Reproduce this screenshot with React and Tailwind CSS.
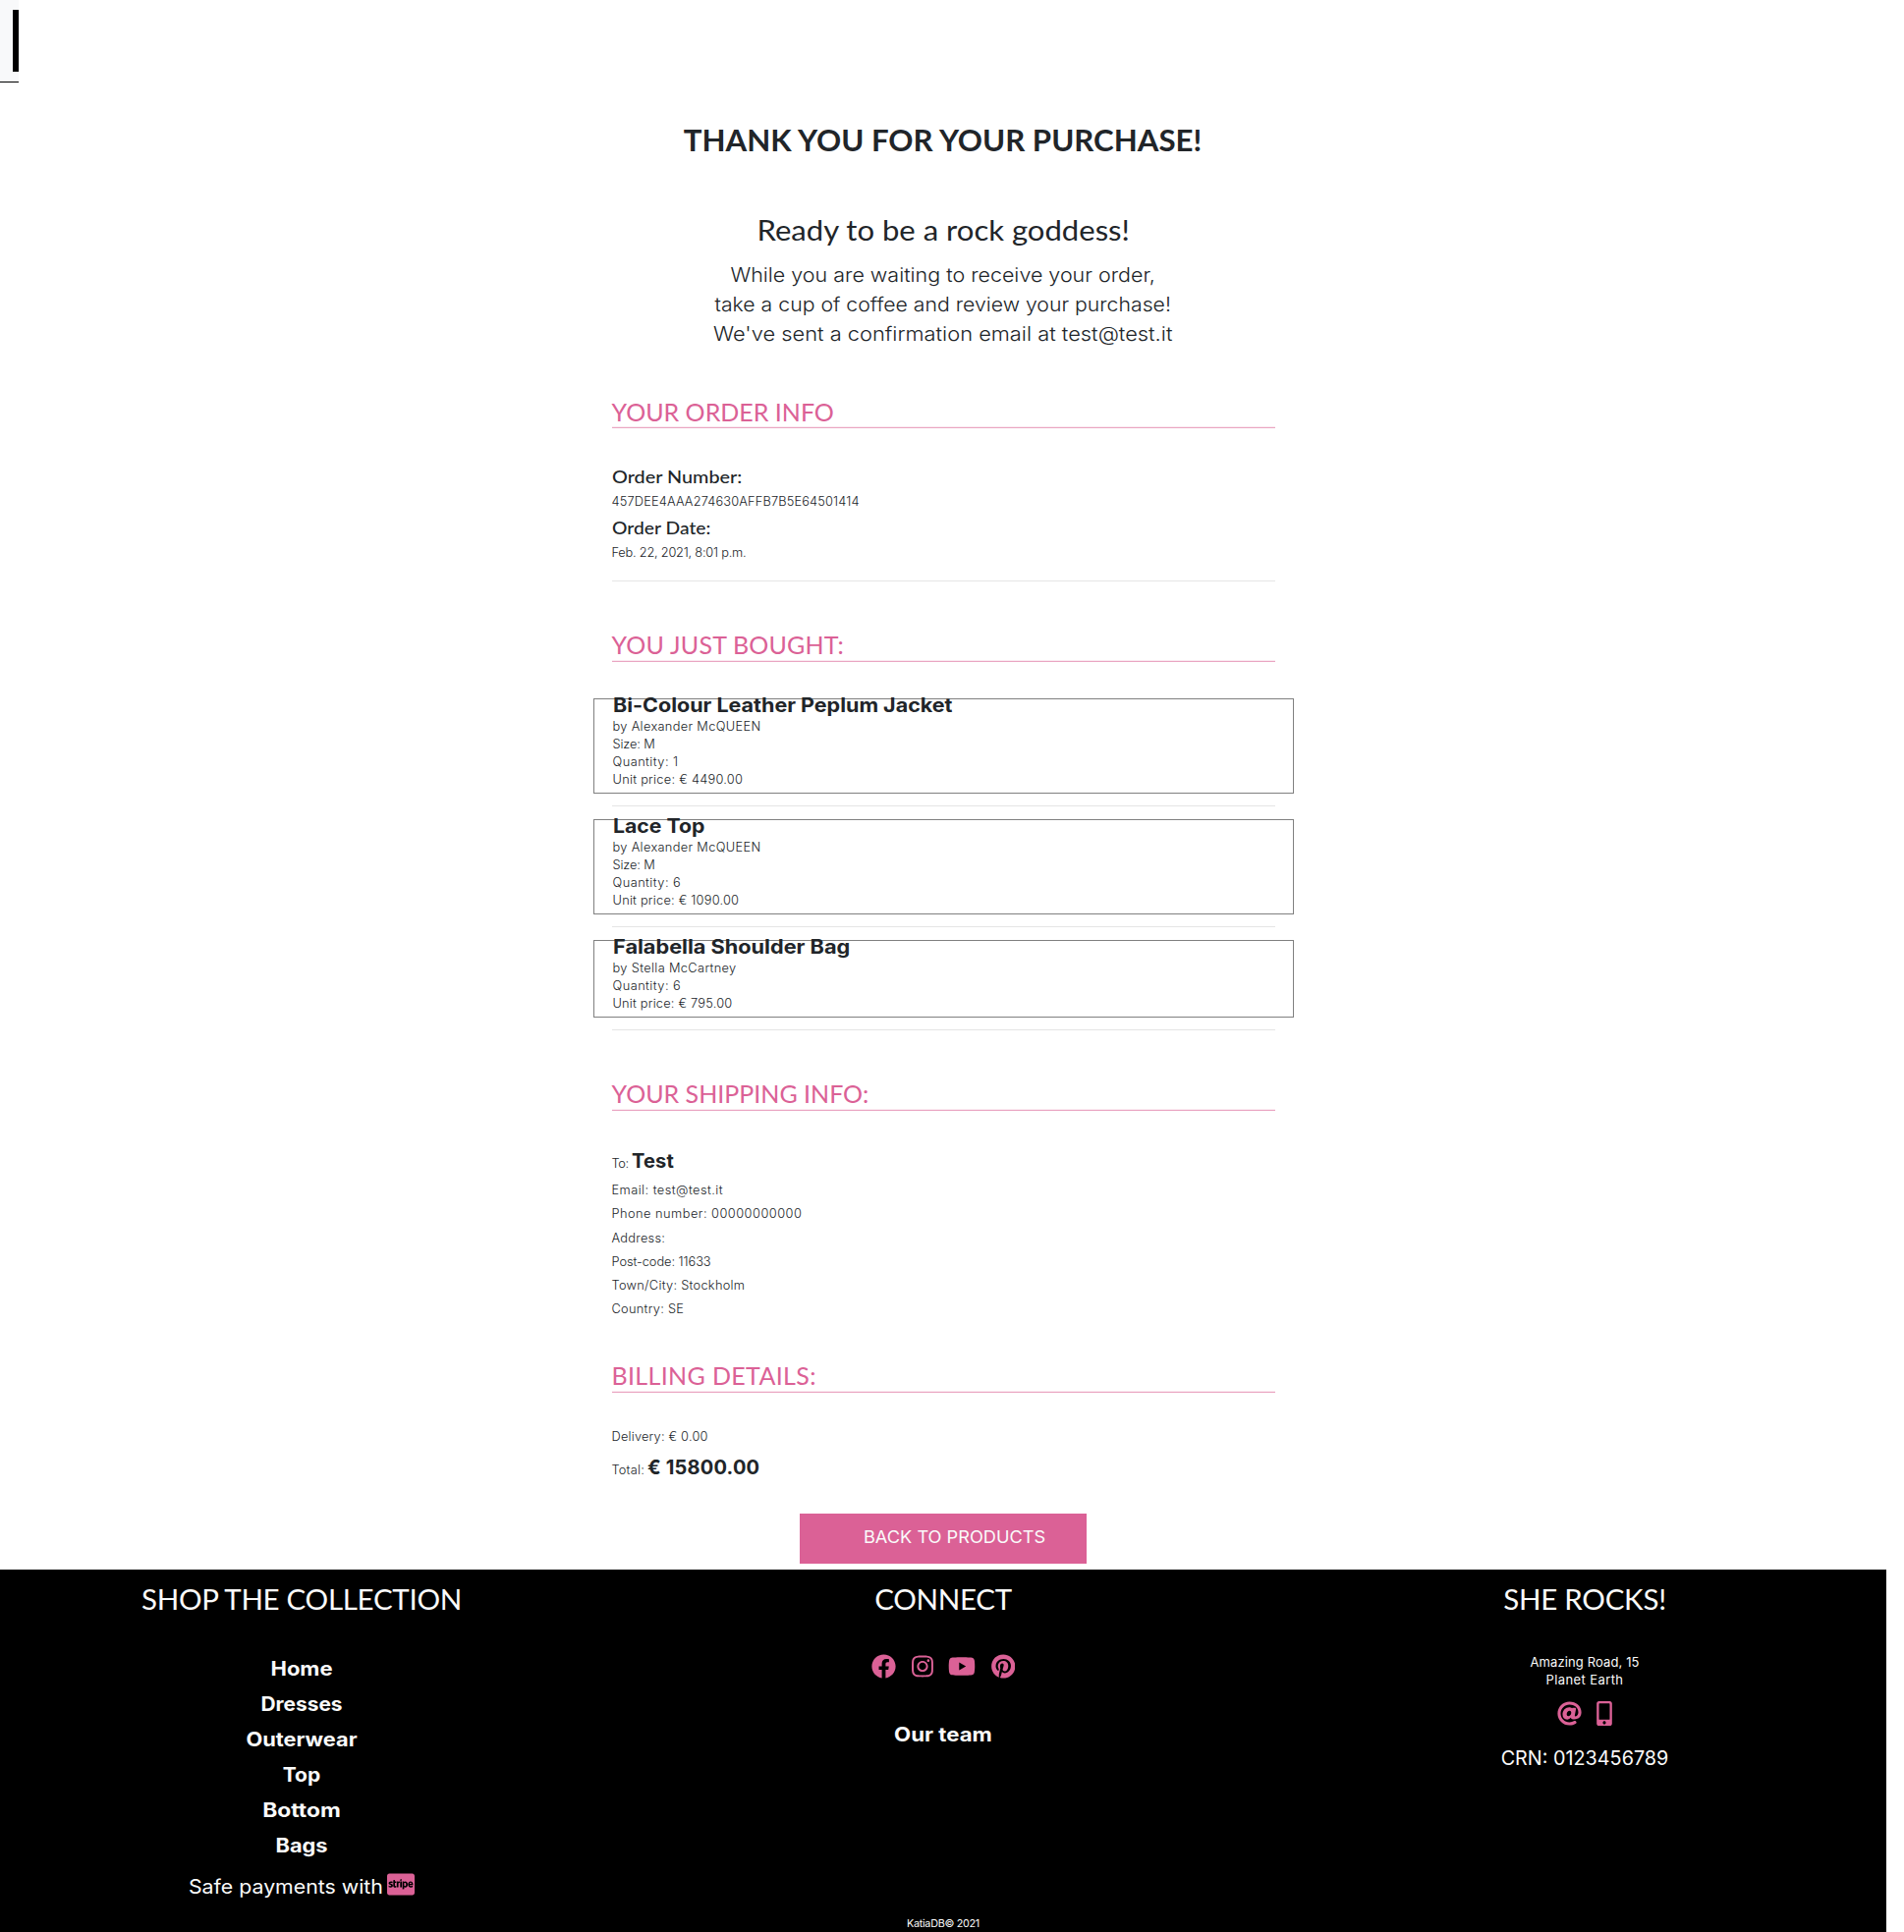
import React from "react";
import { FaFacebook, FaInstagram, FaYoutube, FaPinterest, FaCcStripe, FaAt, FaMobileAlt } from "react-icons/fa";

const LATO = "font-['Lato',sans-serif]";

function SectionTitle({ children, className, short }) {
  return (
    <div className={className}>
      <h2 className={`${LATO} text-[25px] leading-[30px] whitespace-nowrap text-[#db6196]`}>{children}</h2>
      <div className={short ? "h-px bg-[#fae9f0]" : "mt-px h-px bg-[#fae9f0]"} />
      <div className="h-px bg-[#eaa6c2]" />
    </div>
  );
}

function Product({ name, nameClass, className, lines }) {
  return (
    <div>
      <div className={`-mx-[19px] border border-[#808080] pl-[19px] ${className}`}>
        <h3 className={`-mt-1 mb-[3px] origin-left text-[20px] leading-5 font-bold ${nameClass}`}>{name}</h3>
        {lines.map(([text, spacing]) => (
          <p key={text} className={`text-[12.8px] leading-[18px] font-light ${spacing}`}>{text}</p>
        ))}
      </div>
      <div className="mt-3 h-px bg-[#e5e5e5]" />
    </div>
  );
}

const products = [
  {
    name: "Bi-Colour Leather Peplum Jacket",
    nameClass: "w-[321px] whitespace-nowrap scale-x-[1.075]",
    className: "h-[97px]",
    lines: [
      ["by Alexander McQUEEN", "tracking-[0.33px]"],
      ["Size: M", "tracking-[-0.1px]"],
      ["Quantity: 1", "tracking-[0.45px]"],
      ["Unit price: € 4490.00", "tracking-[0.26px]"],
    ],
  },
  {
    name: "Lace Top",
    nameClass: "w-[88px] whitespace-nowrap scale-x-[1.06]",
    className: "h-[97px]",
    lines: [
      ["by Alexander McQUEEN", "tracking-[0.33px]"],
      ["Size: M", "tracking-[-0.1px]"],
      ["Quantity: 6", "tracking-[0.45px]"],
      ["Unit price: € 1090.00", "tracking-[0.22px]"],
    ],
  },
  {
    name: "Falabella Shoulder Bag",
    nameClass: "w-[222px] whitespace-nowrap scale-x-[1.085]",
    className: "h-[79px]",
    lines: [
      ["by Stella McCartney", "tracking-[0.35px]"],
      ["Quantity: 6", "tracking-[0.45px]"],
      ["Unit price: € 795.00", "tracking-[0.2px]"],
    ],
  },
];

const shipping = [
  ["Email: test@test.it", "tracking-[0.45px]"],
  ["Phone number: 00000000000", "tracking-[0.48px]"],
  ["Address:", "tracking-[0.27px]"],
  ["Post-code: 11633", "tracking-[-0.05px]"],
  ["Town/City: Stockholm", "tracking-[0.28px]"],
  ["Country: SE", "tracking-[0.28px]"],
];

const links = [
  ["Home", "scale-x-[1.1]"],
  ["Dresses", "scale-x-[1.045]"],
  ["Outerwear", "scale-x-[1.09]"],
  ["Top", "scale-x-[1.05]"],
  ["Bottom", "scale-x-[1.14]"],
  ["Bags", "scale-x-[1.09]"],
];

export default function App() {
  return (
    <div className="h-[1967px] w-full overflow-hidden bg-white font-['Inter',sans-serif] text-[#212529]">
      <header className="flex h-[84px] w-[19px] justify-end border-b border-black bg-[#f8f9fa] pt-[10px]">
        <div className="h-[63px] w-[6px] bg-black" />
      </header>

      <main className="flex w-[1920px] flex-col items-center">
        <h1 className={`${LATO} mt-10 scale-x-[1.04] text-[30px] leading-9 font-bold`}>THANK YOU FOR YOUR PURCHASE!</h1>
        <h2 className={`${LATO} mt-14 scale-x-[1.053] text-[29.5px] leading-9`}>Ready to be a rock goddess!</h2>
        <div className="mt-[13px] text-center text-[20px] leading-[30px] font-light">
          <p className="scale-x-[1.073]">While you are waiting to receive your order,</p>
          <p className="scale-x-[1.062]">take a cup of coffee and review your purchase!</p>
          <p className="scale-x-[1.092]">We've sent a confirmation email at test@test.it</p>
        </div>

        <div className="w-[675px]">
          <SectionTitle className="mt-[49px]" short>YOUR ORDER INFO</SectionTitle>
          <div className="mt-[38px]">
            <h4 className={`${LATO} origin-left scale-x-[1.1] text-[18px] leading-[22px] font-medium`}>
              Order Number:
            </h4>
            <p className="text-[12.8px] leading-[30px] font-light tracking-[0.16px]">457DEE4AAA274630AFFB7B5E64501414</p>
            <h4 className={`${LATO} origin-left scale-x-[1.07] text-[18px] leading-[22px] font-medium`}>
              Order Date:
            </h4>
            <p className="text-[12.8px] leading-[30px] font-light tracking-[-0.22px]">Feb. 22, 2021, 8:01 p.m.</p>
          </div>
          <div className="mt-[13px] h-px bg-[#e5e5e5]" />

          <SectionTitle className="mt-[49px] tracking-[0.2px]">YOU JUST BOUGHT:</SectionTitle>
          <div className="mt-[37px] flex flex-col gap-[13px]">
            {products.map((p) => (
              <Product key={p.name} {...p} />
            ))}
          </div>

          <SectionTitle className="mt-[49px]">YOUR SHIPPING INFO:</SectionTitle>
          <p className="mt-9 flex h-[30px] items-baseline gap-[3px] leading-[30px]">
            <span className="text-[12.8px] font-light tracking-[-0.3px]">To:</span>
            <strong className="text-[20px] font-bold tracking-[0.2px]">Test</strong>
          </p>
          <div className="mt-[3px]">
            {shipping.map(([text, spacing]) => (
              <p key={text} className={`text-[12.8px] leading-[24.3px] font-light ${spacing}`}>{text}</p>
            ))}
          </div>

          <SectionTitle className="mt-[39px] tracking-[0.35px]">BILLING DETAILS:</SectionTitle>
          <p className="mt-[33px] text-[12.8px] leading-6 font-light tracking-[0.2px]">Delivery: € 0.00</p>
          <p className="mt-1 flex h-[30px] items-baseline gap-[3px] leading-[30px]">
            <span className="text-[12.8px] font-light tracking-[0.2px]">Total:</span>
            <strong className="text-[20px] font-bold tracking-[0.2px]">€ 15800.00</strong>
          </p>
        </div>

        <button className="mt-8 h-[51px] w-[292px] bg-[#db6196] pb-[2px] pl-[23px] text-[17px] leading-6 whitespace-nowrap text-[#fafafa]">
          <span className="inline-block scale-x-[1.07]">BACK TO PRODUCTS</span>
        </button>
      </main>

      <footer className="mt-[6px] grid h-[369px] w-[1920px] grid-cols-3 gap-x-[39px] overflow-hidden bg-black pt-3 text-center text-[#fafafa]">
        <section>
          <h3 className={`${LATO} text-[29.5px] leading-9 tracking-[-0.3px]`}>SHOP THE COLLECTION</h3>
          <ul className="mt-[35px]">
            {links.map(([text, stretch]) => (
              <li key={text} className={`text-[20px] leading-[36.1px] font-bold ${stretch}`}>{text}</li>
            ))}
          </ul>
          <div className="mt-[6px] flex h-9 justify-center gap-[5px]">
            <span className="mx-[6px] scale-x-[1.065] text-[20px] leading-9 whitespace-nowrap">Safe payments with</span>
            <FaCcStripe className="mt-[3px] h-[25px] w-[28px] text-[#db6196]" />
          </div>
        </section>

        <section className="flex flex-col items-center">
          <h3 className={`${LATO} text-[29.5px] leading-9 tracking-[-0.3px]`}>CONNECT</h3>
          <div className="mt-[38px] flex h-[25px] items-center gap-[15.5px] text-[#db6196]">
            <FaFacebook className="h-[25px] w-[25px]" />
            <FaInstagram className="h-[25px] w-[22px]" />
            <FaYoutube className="h-[25px] w-[28px]" />
            <FaPinterest className="h-[25px] w-[24.5px]" />
          </div>
          <p className="mt-[39px] scale-x-[1.11] text-[20px] leading-9 font-bold">Our team</p>
          <p className="mt-[167px] text-[10.8px] leading-4 tracking-[-0.3px]">KatiaDB© 2021</p>
        </section>

        <section className="flex flex-col items-center">
          <h3 className={`${LATO} text-[29.5px] leading-9 tracking-[-0.25px]`}>SHE ROCKS!</h3>
          <div className="mt-[37px] text-[13px] leading-[18px]">
            <p className="tracking-[0.12px]">Amazing Road, 15</p>
            <p className="tracking-[0.4px]">Planet Earth</p>
          </div>
          <div className="mt-[13px] flex h-[25px] gap-[15.5px] text-[#db6196]">
            <FaAt className="h-[25px] w-[25px]" />
            <FaMobileAlt className="h-[25px] w-[16px]" />
          </div>
          <p className="mt-[18px] text-[19.8px] leading-[30px]">CRN: 0123456789</p>
        </section>
      </footer>
    </div>
  );
}
